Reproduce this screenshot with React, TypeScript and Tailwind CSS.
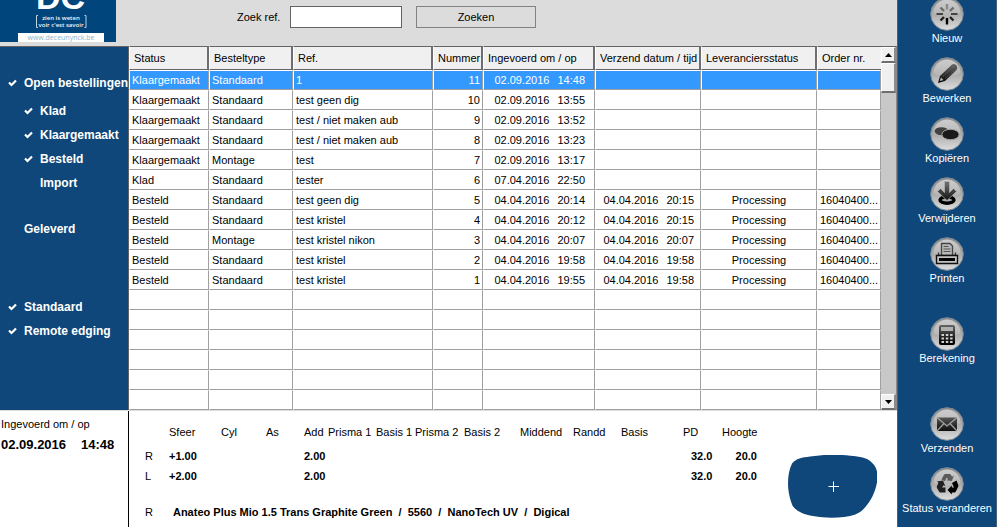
import React, { useState } from 'react';

interface Order {
  status: string;
  type: string;
  ref: string;
  nr: number;
  entered: [string, string];
  sent?: [string, string];
  supplier?: string;
  orderNr?: string;
}

const ORDERS: Order[] = [
  { status: 'Klaargemaakt', type: 'Standaard', ref: '1', nr: 11, entered: ['02.09.2016', '14:48'] },
  { status: 'Klaargemaakt', type: 'Standaard', ref: 'test geen dig', nr: 10, entered: ['02.09.2016', '13:55'] },
  { status: 'Klaargemaakt', type: 'Standaard', ref: 'test / niet maken aub', nr: 9, entered: ['02.09.2016', '13:52'] },
  { status: 'Klaargemaakt', type: 'Standaard', ref: 'test / niet maken aub', nr: 8, entered: ['02.09.2016', '13:23'] },
  { status: 'Klaargemaakt', type: 'Montage', ref: 'test', nr: 7, entered: ['02.09.2016', '13:17'] },
  { status: 'Klad', type: 'Standaard', ref: 'tester', nr: 6, entered: ['07.04.2016', '22:50'] },
  { status: 'Besteld', type: 'Standaard', ref: 'test geen dig', nr: 5, entered: ['04.04.2016', '20:14'], sent: ['04.04.2016', '20:15'], supplier: 'Processing', orderNr: '16040400...' },
  { status: 'Besteld', type: 'Standaard', ref: 'test kristel', nr: 4, entered: ['04.04.2016', '20:12'], sent: ['04.04.2016', '20:15'], supplier: 'Processing', orderNr: '16040400...' },
  { status: 'Besteld', type: 'Montage', ref: 'test kristel nikon', nr: 3, entered: ['04.04.2016', '20:07'], sent: ['04.04.2016', '20:07'], supplier: 'Processing', orderNr: '16040400...' },
  { status: 'Besteld', type: 'Standaard', ref: 'test kristel', nr: 2, entered: ['04.04.2016', '19:58'], sent: ['04.04.2016', '19:58'], supplier: 'Processing', orderNr: '16040400...' },
  { status: 'Besteld', type: 'Standaard', ref: 'test kristel', nr: 1, entered: ['04.04.2016', '19:55'], sent: ['04.04.2016', '19:58'], supplier: 'Processing', orderNr: '16040400...' },
];

const EMPTY_ROWS = [0, 1, 2, 3, 4, 5];

const COLUMNS = [
  { title: 'Status', width: 'w-[80px]' },
  { title: 'Besteltype', width: 'w-[84px]' },
  { title: 'Ref.', width: '' },
  { title: 'Nummer', width: 'w-[50px]' },
  { title: 'Ingevoerd om / op', width: 'w-[112px]' },
  { title: 'Verzend datum / tijd', width: 'w-[106px]' },
  { title: 'Leveranciersstatus', width: 'w-[116px]' },
  { title: 'Order nr.', width: 'w-[64px]' },
];

const LENS_COLUMNS = [
  { title: 'Sfeer', width: 'w-[52px]' },
  { title: 'Cyl', width: 'w-[45px]' },
  { title: 'As', width: 'w-[38px]' },
  { title: 'Add', width: 'w-[24px]' },
  { title: 'Prisma 1', width: 'w-[48px]' },
  { title: 'Basis 1', width: 'w-[39px]' },
  { title: 'Prisma 2', width: 'w-[49px]' },
  { title: 'Basis 2', width: 'w-[56px]' },
  { title: 'Middend', width: 'w-[53px]' },
  { title: 'Randd', width: 'w-[48px]' },
  { title: 'Basis', width: 'w-[62px]' },
  { title: 'PD', width: 'w-[39px]' },
  { title: 'Hoogte', width: 'w-[35px]' },
];

const LENSES = [
  { eye: 'R', sph: '+1.00', add: '2.00', pd: '32.0', height: '20.0' },
  { eye: 'L', sph: '+2.00', add: '2.00', pd: '32.0', height: '20.0' },
];

const Logo = () => (
  <svg width="116" height="42" viewBox="0 0 116 42" className="block bg-[#00457c]" role="img" aria-label="DC">
    <text x="36" y="9" fontFamily="Liberation Sans, Arial, sans-serif" fontWeight="700" fontSize="34" fill="#fff">DC</text>
    <path d="M38 15.5H36.5V27.5H38M84.5 15.5H86V27.5H84.5" fill="none" stroke="#c3d3e0" />
    <g fontFamily="Open Sans, sans-serif" fontWeight="600" fontSize="6" fill="#f2f6fa" textAnchor="middle">
      <text x="61" y="20">zien is weten</text>
      <text x="61" y="27">voir c'est savoir</text>
    </g>
    <rect x="18" y="33" width="86" height="9" fill="#fff" />
    <text x="61" y="40" fontFamily="Open Sans, sans-serif" fontSize="7" fill="#8fb4c8" textAnchor="middle">www.deceunynck.be</text>
  </svg>
);

interface FilterProps {
  label: string;
  checked?: boolean;
  className?: string;
}

const Filter: React.FC<FilterProps> = ({ label, checked, className = '' }) => (
  <label className={`flex h-6 items-center whitespace-nowrap text-[12px] font-bold text-white ${className}`}>
    <span className="grid w-4 shrink-0">
      <input type="checkbox" defaultChecked={checked} className="peer col-start-1 row-start-1 h-2 w-2 appearance-none" />
      <svg width="9" height="8" viewBox="0 0 9 8" className="pointer-events-none invisible col-start-1 row-start-1 peer-checked:visible">
        <path d="M1 3.5L3.5 6L8 1.5" fill="none" stroke="#fff" strokeWidth="2.2" />
      </svg>
    </span>
    {label}
  </label>
);

// round glossy button face, id also names the dark ramp used by the glyph on it
const Disc: React.FC<{ id: string; children: React.ReactNode }> = ({ id, children }) => (
  <svg width="34" height="34" viewBox="0 0 34 34" className="block">
    <defs>
      <linearGradient id={`${id}-disc`} x1="0" y1="0" x2="0" y2="1">
        <stop offset="0" stopColor="#8a8a8a" />
        <stop offset="0.5" stopColor="#ababab" />
        <stop offset="1" stopColor="#dedede" />
      </linearGradient>
      <linearGradient id={`${id}-shine`} x1="0" y1="0" x2="0" y2="1">
        <stop offset="0" stopColor="#dcdcdc" />
        <stop offset="1" stopColor="#b6b6b6" />
      </linearGradient>
      <linearGradient id={id} gradientUnits="userSpaceOnUse" x1="0" y1="7" x2="0" y2="27">
        <stop offset="0" stopColor="#6a6a6a" />
        <stop offset="0.55" stopColor="#2c2c2c" />
        <stop offset="1" stopColor="#000" />
      </linearGradient>
    </defs>
    <circle cx="17" cy="17" r="16.3" fill={`url(#${id}-disc)`} stroke="#7b8a97" strokeWidth="1" />
    <path d="M3.5 16C3.5 8 10 2.5 17 2.5S30.5 8 30.5 16C26 20 8 20 3.5 16Z" fill={`url(#${id}-shine)`} opacity="0.8" />
    {children}
  </svg>
);

const NewIcon = () => (
  <Disc id="new">
    <g strokeWidth="2.4" fill="none">
      <path d="M17 7V12.5" stroke="#8a8a8a" />
      <path d="M10.5 10.5L14 14M23.5 10.5L20 14" stroke="#6c6c6c" />
      <path d="M6.5 17H13M21 17H27.5" stroke="#444" strokeWidth="2" />
      <path d="M10.5 23.5L14 20M23.5 23.5L20 20" stroke="#222" />
      <path d="M17 21V27.5" stroke="#000" />
    </g>
  </Disc>
);

const EditIcon = () => (
  <Disc id="edit">
    <path d="M8 26L10 19L21.5 8Q24 6 26.5 8.5Q28 11 26.5 13L15 24Z" fill="url(#edit)" />
    <path d="M9.8 24L11 20.5L13.5 23Z" fill="#b9b9b9" />
    <path d="M13 19.5L23.5 9.5M15.5 21.5L26 12" stroke="#7a7a7a" strokeWidth="0.6" strokeDasharray="1.5 1" />
  </Disc>
);

const CopyIcon = () => (
  <Disc id="copy">
    <ellipse cx="11.5" cy="14.2" rx="6.8" ry="4" fill="#424242" />
    <ellipse cx="20.5" cy="17.5" rx="8.6" ry="5.2" fill="#1a1a1a" stroke="#a8a8a8" />
  </Disc>
);

const DeleteIcon = () => (
  <Disc id="delete">
    <ellipse cx="17" cy="23" rx="7" ry="3.2" fill="#aaa" stroke="#000" strokeWidth="3.4" />
    <path d="M14.5 4.5H19.5V15.5L23.5 11.5L26.5 14.5L17 23.5L7.5 14.5L10.5 11.5L14.5 15.5Z" fill="url(#delete)" stroke="#b5b5b5" strokeWidth="0.7" />
  </Disc>
);

const PrintIcon = () => (
  <Disc id="print">
    <path d="M11.5 18.5V6.5H20L22.5 9V18.5" fill="#b8b8b8" stroke="#444" strokeWidth="1.3" />
    <path d="M13.5 9.5H18.5M13.5 12H20.5M13.5 14.5H20.5" stroke="#555" />
    <path d="M8.5 15.5V18.5H25.5V15.5" fill="none" stroke="#333" strokeWidth="1.3" />
    <path d="M6.5 18.5H27.5V26.5H6.5Z" fill="#c4c4c4" stroke="#111" strokeWidth="1.4" />
    <path d="M9 21H25V24H9Z" fill="#000" />
  </Disc>
);

const CalcIcon = () => (
  <Disc id="calc">
    <rect x="9" y="8" width="16" height="20" rx="2" fill="url(#calc)" />
    <rect x="11" y="10" width="12" height="4" fill="#b0b0b0" />
    <path d="M11.5 18H14M15.8 18H18.3M20.1 18H22.6M11.5 21.5H14M15.8 21.5H18.3M20.1 21.5H22.6M11.5 25H14M15.8 25H18.3M20.1 25H22.6" stroke="#d0d0d0" strokeWidth="2.2" />
  </Disc>
);

const MailIcon = () => (
  <Disc id="mail">
    <rect x="7" y="10.5" width="20" height="13.5" fill="url(#mail)" />
    <path d="M7 10.5L17 19L27 10.5M7 24L14 16.5M27 24L20 16.5" fill="none" stroke="#a4a4a4" strokeWidth="1.2" />
  </Disc>
);

const RecycleIcon = () => (
  <Disc id="recycle">
    <path d="M11.5 12.5L14 7.8Q14.5 7 15.5 7H19.5Q20.5 7 21 8L22 9.7L24 8.5L21.8 14L16.3 13.3L18 12.3L16.8 10.5L14.8 14.3Z" fill="#5a5a5a" />
    <path d="M7 14.5L13 13.5L15.2 19L13.5 18.2L12 20.5H15.5V25.5H10.5Q9.5 25.5 9 24.5L7 21Q6.5 20 7 19L8.5 15.7Z" fill="#202020" />
    <path d="M22 16L26.5 13.5L28.3 18Q28.6 19 28 20L25.8 24.5Q25.3 25.5 24.3 25.5H21.8V27.5L17.5 23L21.8 18.5V20.5H24Z" fill="#000" />
  </Disc>
);

const ACTIONS = [
  { label: 'Nieuw', icon: NewIcon, gap: '' },
  { label: 'Bewerken', icon: EditIcon, gap: 'mt-3' },
  { label: 'Kopiëren', icon: CopyIcon, gap: 'mt-3' },
  { label: 'Verwijderen', icon: DeleteIcon, gap: 'mt-3' },
  { label: 'Printen', icon: PrintIcon, gap: 'mt-3' },
  { label: 'Berekening', icon: CalcIcon, gap: 'mt-8' },
  { label: 'Verzenden', icon: MailIcon, gap: 'mt-[42px]' },
  { label: 'Status veranderen', icon: RecycleIcon, gap: 'mt-3' },
];

const Moment: React.FC<{ value?: [string, string] }> = ({ value }) =>
  value ? (
    <span className="flex justify-end gap-2 pr-1">
      <span>{value[0]}</span>
      <span>{value[1]}</span>
    </span>
  ) : null;

const cell = 'h-5 overflow-hidden whitespace-nowrap border-t border-r border-b border-l border-t-white border-l-white border-r-[#a0a0a0] border-b-[#a0a0a0] px-[2px] py-0 leading-[17px]';

const OrderTable = () => {
  const [selected, setSelected] = useState(11);

  return (
    <table className="w-full table-fixed border-separate border-spacing-0 bg-white text-[11px]">
      <colgroup>
        {COLUMNS.map(c => <col key={c.title} className={c.width} />)}
      </colgroup>
      <thead>
        <tr>
          {COLUMNS.map(c => (
            <th
              key={c.title}
              className="h-6 whitespace-nowrap border-t border-b border-r-2 border-l border-t-[#646464] border-b-[#646464] border-r-[#6e6e6e] border-l-white bg-[#f0f0f0] px-1 py-0 text-left font-normal last:border-r-0"
            >
              {c.title}
            </th>
          ))}
        </tr>
      </thead>
      <tbody>
        {ORDERS.map(o => (
          <tr
            key={o.nr}
            onClick={() => setSelected(o.nr)}
            className={o.nr === selected ? 'bg-[#3399ff] text-white' : ''}
          >
            <td className={cell}>{o.status}</td>
            <td className={cell}>{o.type}</td>
            <td className={cell}>{o.ref}</td>
            <td className={`${cell} text-right`}>{o.nr}</td>
            <td className={cell}><span className="block pr-[3px]"><Moment value={o.entered} /></span></td>
            <td className={cell}><Moment value={o.sent} /></td>
            <td className={`${cell} text-center`}>{o.supplier}</td>
            <td className={cell}>{o.orderNr}</td>
          </tr>
        ))}
        {EMPTY_ROWS.map(i => (
          <tr key={i}>
            {COLUMNS.map(c => <td key={c.title} className={cell} />)}
          </tr>
        ))}
      </tbody>
    </table>
  );
};

const raised = 'flex w-full items-center justify-center border-r-2 border-b-2 border-l border-t border-t-white border-l-white border-r-[#8c8c8c] border-b-[#6e6e6e] bg-[#f0f0f0]';

const ScrollBar = () => (
  <div className="flex w-4 shrink-0 flex-col border-t border-r border-t-[#646464] border-r-[#8c8c8c] bg-[#c8c8c8]">
    <button type="button" aria-label="Omhoog" className={`${raised} h-4`}>
      <svg width="7" height="4" viewBox="0 0 7 4"><path d="M0 4L3.5 0L7 4Z" /></svg>
    </button>
    <div className={`${raised} h-[30px]`} />
    <button type="button" aria-label="Omlaag" className={`${raised} mt-auto h-4`}>
      <svg width="7" height="4" viewBox="0 0 7 4"><path d="M0 0L3.5 4L7 0Z" /></svg>
    </button>
  </div>
);

const LensDetails = () => (
  <section className="flex min-w-0 flex-1 text-[11px]">
    <div className="pt-[11px]">
      <table className="w-[628px] table-fixed border-separate border-spacing-0 whitespace-nowrap">
        <colgroup>
          <col className="w-[40px]" />
          {LENS_COLUMNS.map(c => <col key={c.title} className={c.width} />)}
        </colgroup>
        <thead>
          <tr>
            <td className="h-6 p-0 pb-1" />
            {LENS_COLUMNS.map(c => (
              <th key={c.title} className="h-6 p-0 pb-1 text-left font-normal">{c.title}</th>
            ))}
          </tr>
        </thead>
        <tbody>
          {LENSES.map(l => (
            <tr key={l.eye} className="h-5 font-bold">
              <th className="p-0 pl-4 text-left font-normal">{l.eye}</th>
              <td className="p-0">{l.sph}</td>
              <td className="p-0" colSpan={2} />
              <td className="p-0">{l.add}</td>
              <td className="p-0" colSpan={7} />
              <td className="p-0 pl-2">{l.pd}</td>
              <td className="p-0 text-right">{l.height}</td>
            </tr>
          ))}
        </tbody>
      </table>
      <p className="mt-4 flex h-5 items-center gap-5 whitespace-pre pl-4">
        R
        <b>Anateo Plus Mio 1.5 Trans Graphite Green  /  5560  /  NanoTech UV  /  Digical</b>
      </p>
    </div>
    <svg width="90" height="64" viewBox="0 0 90 64" className="mt-[43px] mr-[19px] ml-auto shrink-0" role="img" aria-label="Glasvorm">
      <path d="M36 1H54C66 2 74 2.5 79 5C85 8.5 88 12.5 89 17.5V28.5C87 38.5 83 46.5 77 53.5C71 60.5 65 61.5 56 63C46 64 36 64 25 62C14 60.5 6 55.5 4 50.5C1 42.5 0 35.5 0 29.5C0 22.5 1 15.5 4 9.5C8 4.5 14 3.5 22 2.5Z" fill="#10477a" />
      <path d="M40.5 32.5H51M45.5 27.5V38" stroke="#fff" />
    </svg>
  </section>
);

export default function App() {
  return (
    <div className="flex min-h-screen overflow-hidden bg-white font-['Liberation_Sans',Arial,sans-serif] text-[11px] text-black">
      <main className="flex min-w-0 flex-1 flex-col">
        <header className="flex h-[46px] items-start bg-[#dcdcdc]">
          <Logo />
          <form className="flex items-center pt-1.5 pl-[121px]" onSubmit={e => e.preventDefault()}>
            <label htmlFor="ref" className="w-[53px]">Zoek ref.</label>
            <input id="ref" type="text" className="h-[22px] w-28 border border-[#646464] bg-white px-1" />
            <button type="submit" className="ml-3.5 h-[22px] w-[120px] border border-[#828282] bg-[#dcdcdc]">Zoeken</button>
          </form>
        </header>

        <div className="flex">
          <nav className="flex w-[129px] shrink-0 flex-col border-t border-r border-[#646464] bg-[#10477a] pt-6 pl-2">
            <Filter label="Open bestellingen" checked />
            <Filter label="Klad" checked className="mt-1 pl-4" />
            <Filter label="Klaargemaakt" checked className="pl-4" />
            <Filter label="Besteld" checked className="pl-4" />
            <Filter label="Import" className="pl-4" />
            <Filter label="Geleverd" className="mt-[22px]" />
            <Filter label="Standaard" checked className="mt-[54px]" />
            <Filter label="Remote edging" checked />
          </nav>
          <div className="min-w-0 flex-1">
            <OrderTable />
          </div>
          <ScrollBar />
        </div>

        <div className="flex flex-1 border-t border-[#dcdcdc]">
          <section className="w-[129px] shrink-0 border-r border-black pt-1.5 pl-px">
            <h2 className="leading-[14px]">Ingevoerd om / op</h2>
            <p className="mt-1.5 flex gap-[15px] text-[13px] leading-4 font-bold">
              <span>02.09.2016</span>
              <span>14:48</span>
            </p>
          </section>
          <LensDetails />
        </div>
      </main>

      <aside className="mr-[3px] flex w-[100px] shrink-0 flex-col items-center border-r border-l border-[#4a5f78] bg-[#10477a]">
        <div className="-mt-[3px] flex flex-col items-center">
          {ACTIONS.map(({ label, icon: Icon, gap }) => (
            <button key={label} type="button" className={`flex flex-col items-center whitespace-nowrap leading-[14px] text-white ${gap}`}>
              <Icon />
              {label}
            </button>
          ))}
        </div>
      </aside>
    </div>
  );
}
